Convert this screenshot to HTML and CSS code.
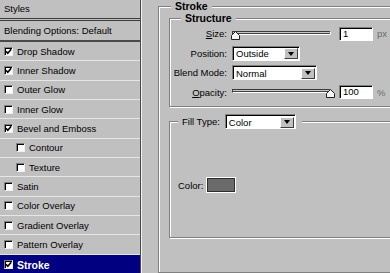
FILE: index.html
```html
<!DOCTYPE html>
<html lang="en">
<head>
    <meta charset="UTF-8">
    <meta name="viewport" content="width=device-width, initial-scale=1.0">
    <title>Layer Style - Stroke</title>
    <link rel="stylesheet" href="styles.css">
</head>
<body>
    <div class="dialog">
        <div class="style-list">
            <div class="list-head">Styles</div>
            <div class="list-blend">Blending Options: Default</div>
            <div class="item"><span class="check on"><svg viewBox="0 0 7 7"><polyline points="1,3.2 2.8,5.2 6.2,1.2"/></svg></span>Drop Shadow</div>
            <div class="item"><span class="check on"><svg viewBox="0 0 7 7"><polyline points="1,3.2 2.8,5.2 6.2,1.2"/></svg></span>Inner Shadow</div>
            <div class="item"><span class="check"></span>Outer Glow</div>
            <div class="item"><span class="check"></span>Inner Glow</div>
            <div class="item"><span class="check on"><svg viewBox="0 0 7 7"><polyline points="1,3.2 2.8,5.2 6.2,1.2"/></svg></span>Bevel and Emboss</div>
            <div class="item sub"><span class="check"></span>Contour</div>
            <div class="item sub"><span class="check"></span>Texture</div>
            <div class="item"><span class="check"></span>Satin</div>
            <div class="item"><span class="check"></span>Color Overlay</div>
            <div class="item"><span class="check"></span>Gradient Overlay</div>
            <div class="item"><span class="check"></span>Pattern Overlay</div>
            <div class="item selected"><span class="check on"><svg viewBox="0 0 7 7"><polyline points="1,3.2 2.8,5.2 6.2,1.2"/></svg></span>Stroke</div>
        </div>

        <div class="options">
            <fieldset class="group outer">
                <legend>Stroke</legend>

                <fieldset class="group structure">
                    <legend>Structure</legend>

                    <div class="field">
                        <label><u>S</u>ize:</label>
                        <div class="slider">
                            <div class="track"></div>
                            <svg class="thumb" viewBox="0 0 9 9"><polygon points="4.5,0.5 8.5,4.5 8.5,8.5 0.5,8.5 0.5,4.5"/></svg>
                        </div>
                        <div class="text-input">1</div>
                        <span class="unit">px</span>
                    </div>

                    <div class="field">
                        <label>Position:</label>
                        <div class="select select-pos"><span class="value">Outside</span><span class="arrow"></span></div>
                    </div>

                    <div class="field">
                        <label>Blend Mode:</label>
                        <div class="select select-blend"><span class="value">Normal</span><span class="arrow"></span></div>
                    </div>

                    <div class="field">
                        <label><u>O</u>pacity:</label>
                        <div class="slider">
                            <div class="track"></div>
                            <svg class="thumb thumb-end" viewBox="0 0 9 9"><polygon points="4.5,0.5 8.5,4.5 8.5,8.5 0.5,8.5 0.5,4.5"/></svg>
                        </div>
                        <div class="text-input">100</div>
                        <span class="unit">%</span>
                    </div>
                </fieldset>

                <fieldset class="group fill">
                    <legend>
                        <span>Fill Type:</span>
                        <div class="select select-fill"><span class="value">Color</span><span class="arrow"></span></div>
                    </legend>

                    <div class="color-field">
                        <span>Color:</span>
                        <div class="swatch"></div>
                    </div>
                </fieldset>
            </fieldset>
        </div>
    </div>
</body>
</html>
```

FILE: styles.css
```css
* {
    margin: 0;
    padding: 0;
    box-sizing: border-box;
}

body {
    font-family: "Liberation Sans", Arial, sans-serif;
    font-size: 9.5px;
    color: #000000;
    background: #c0c0c0;
    width: 390px;
    height: 273px;
    overflow: hidden;
}

.dialog {
    display: flex;
    width: 440px;
    height: 273px;
}

/* left style list */

.style-list {
    flex: none;
    width: 141px;
    border-right: 1px solid #4a4a4a;
}

.list-head {
    height: 21px;
    line-height: 18px;
    padding-left: 4px;
    border-bottom: 3px double #3c3c3c;
}

.list-blend {
    height: 21px;
    line-height: 19px;
    padding-left: 4px;
    border-bottom: 2px solid #4a4a4a;
}

.item {
    display: flex;
    align-items: center;
    gap: 4px;
    height: 19.33px;
    padding-left: 4px;
    border-bottom: 1px solid #e6e6e6;
}

.item.sub {
    padding-left: 16px;
}

.item.selected {
    background: #000080;
    color: #ffffff;
    font-weight: bold;
    font-size: 10.5px;
    border-bottom: none;
    height: 20px;
}

.check {
    flex: none;
    width: 9px;
    height: 9px;
    background: #ffffff;
    border: 1px solid;
    border-color: #808080 #f0f0f0 #f0f0f0 #808080;
    box-shadow: inset 1px 1px 0 #000000;
}

.check svg {
    display: block;
    width: 7px;
    height: 7px;
}

.check polyline {
    fill: none;
    stroke: #000000;
    stroke-width: 1.6;
}

/* right options */

.options {
    flex: none;
    width: 298px;
    border-left: 1px solid #f2f2f2;
    padding-left: 16px;
}

.group {
    border: 1px solid #808080;
    box-shadow: inset 1px 1px 0 #ffffff, 1px 1px 0 #ffffff;
}

.group > legend {
    background: #c0c0c0;
    padding: 0 4px;
}

.outer {
    padding: 0 0 34px 10px;
}

.outer > legend,
.structure > legend {
    font-weight: bold;
    font-size: 10.5px;
    line-height: 12px;
}

.outer > legend {
    margin-left: 2px;
}

.structure {
    padding: 0 0 4px 0;
}

.structure > legend {
    margin-left: 11px;
}

.field {
    display: flex;
    align-items: center;
    height: 19.5px;
}

.field label {
    flex: none;
    width: 57px;
    text-align: right;
    margin-right: 5px;
}

.slider {
    position: relative;
    flex: none;
    width: 99px;
    height: 12px;
}

.track {
    height: 4px;
    margin-top: 3px;
    background: #c8c8c8;
    border: 1px solid;
    border-color: #3a3a3a #ffffff #ffffff #3a3a3a;
    border-radius: 0 2px 2px 0;
    box-shadow: inset 0 -1px 0 #404040;
}

.thumb {
    position: absolute;
    top: 3px;
    left: -1px;
    width: 9px;
    height: 9px;
}

.thumb-end {
    left: 94px;
}

.thumb polygon {
    fill: #f4f4f4;
    stroke: #202020;
    stroke-width: 1;
}

.text-input {
    flex: none;
    width: 34px;
    height: 14px;
    margin-left: 8px;
    padding-left: 3px;
    line-height: 12px;
    background: #ffffff;
    border: 1px solid;
    border-color: #808080 #ffffff #ffffff #808080;
    box-shadow: inset 1px 1px 0 #000000;
}

.unit {
    margin-left: 4px;
    color: #6a6a6a;
}

.select {
    flex: none;
    display: flex;
    align-items: center;
    justify-content: space-between;
    height: 15px;
    background: #ffffff;
    border: 1px solid;
    border-color: #808080 #ffffff #ffffff #808080;
    box-shadow: inset 1px 1px 0 #000000;
}

.select .value {
    padding-left: 3px;
    padding-top: 1px;
}

.select .arrow {
    display: flex;
    align-items: center;
    justify-content: center;
    width: 14px;
    height: 11px;
    margin-right: 1px;
    margin-top: 1px;
    background: #c0c0c0;
    border: 1px solid;
    border-color: #ffffff #404040 #404040 #ffffff;
}

.select .arrow::after {
    content: "";
    border-left: 3.5px solid transparent;
    border-right: 3.5px solid transparent;
    border-top: 4px solid #000000;
}

.select-pos {
    width: 68px;
}

.select-blend {
    width: 85px;
}

.fill {
    margin-top: 7px;
    padding: 48px 0 44px 8px;
}

.fill > legend {
    display: flex;
    align-items: center;
    gap: 5px;
    padding: 0 6px 0 4px;
}

.select-fill {
    width: 71px;
}

.color-field {
    display: flex;
    align-items: center;
    gap: 3px;
    height: 16px;
}

.swatch {
    width: 30px;
    height: 16px;
    background: #6b6b6b;
    border: 1px solid #ffffff;
    box-shadow: inset 0 0 0 1px #2e2e2e;
}
```
